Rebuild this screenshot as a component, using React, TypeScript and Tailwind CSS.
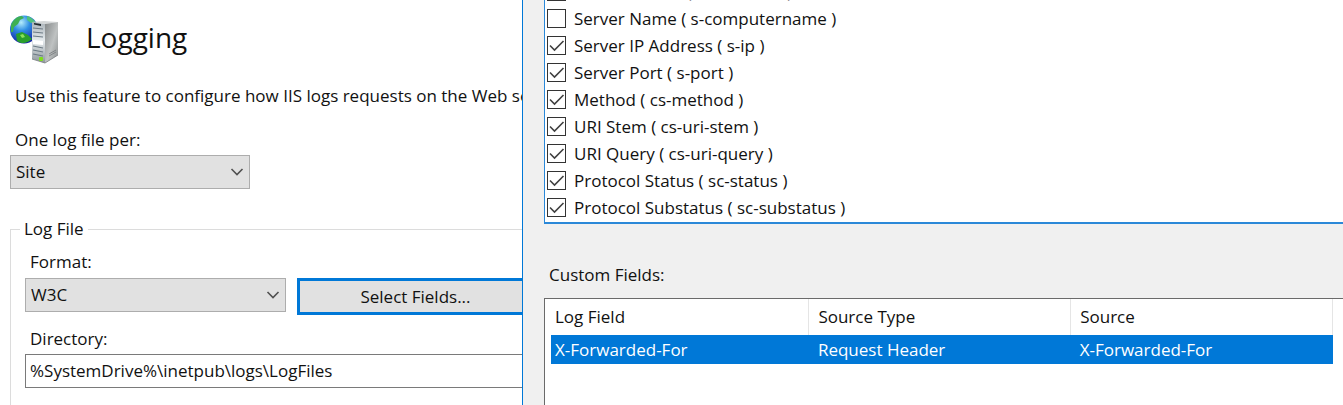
import { useState } from "react";

const initialFields = [
  { id: "s-sitename", label: "Service Name", checked: true },
  { id: "s-computername", label: "Server Name", checked: false },
  { id: "s-ip", label: "Server IP Address", checked: true },
  { id: "s-port", label: "Server Port", checked: true },
  { id: "cs-method", label: "Method", checked: true },
  { id: "cs-uri-stem", label: "URI Stem", checked: true },
  { id: "cs-uri-query", label: "URI Query", checked: true },
  { id: "sc-status", label: "Protocol Status", checked: true },
  { id: "sc-substatus", label: "Protocol Substatus", checked: true },
];

const customFields = [
  { logField: "X-Forwarded-For", sourceType: "Request Header", source: "X-Forwarded-For" },
];

function ServerIcon() {
  return (
    <svg viewBox="0 0 50 50" className="size-[50px] shrink-0" aria-hidden="true">
      <defs>
        <radialGradient id="globe" cx="0.4" cy="0.25" r="0.75">
          <stop offset="0" stopColor="#b4ecfb" />
          <stop offset="0.4" stopColor="#2f8fe4" />
          <stop offset="1" stopColor="#1422a4" />
        </radialGradient>
        <linearGradient id="side" x1="0" y1="0" x2="1" y2="1">
          <stop offset="0" stopColor="#85898a" />
          <stop offset="0.55" stopColor="#bfc2c2" />
          <stop offset="1" stopColor="#8b8f90" />
        </linearGradient>
        <linearGradient id="front" x1="0" y1="0" x2="0" y2="1">
          <stop offset="0" stopColor="#a9b2b8" />
          <stop offset="0.45" stopColor="#e6ebee" />
          <stop offset="1" stopColor="#8d969b" />
        </linearGradient>
      </defs>
      <circle cx="14" cy="14.500" r="14" fill="url(#globe)" />
      <path d="M1 10 C3 5 7 1 12 1 L14 3 L10 5 L8 9 L4 12 L3 17 L1 17 Z" fill="#3fb053" />
      <path d="M17 1 C21 2 24 5 26 8 L21 8 L17 5 Z" fill="#4fc27c" />
      <path d="M6 19 L12 17 L18 20 L22 24 C17 29 11 29 7 26 Z" fill="#2a9f2c" />
      <path d="M10 20 L13 19 L15 22 L12 23 Z" fill="#8ae05a" />
      <path d="M22 7 L34 6 L48 7 L35 9 Z" fill="#d3d6d7" />
      <path d="M22 7 L35 9 L35 48 L22 44 Z" fill="url(#front)" />
      <path d="M35 9 L48 7 L48 40 L35 48 Z" fill="url(#side)" />
      <path d="M24 8 L31 9 L31 11 L24 9.500 Z" fill="#222a30" />
      <path
        d="M23 13 L33 14 M23 17 L33 18 M23 21 L33 22 M23 31 L33 33 M23 35 L33 37 M23 39 L33 41"
        stroke="#6c7a84"
        strokeWidth="1.200"
      />
      <path d="M23 25 L33 26 L33 30 L23 29 Z" fill="#ffffff" />
      <path d="M22 44 L35 48 L48 40" fill="none" stroke="#777c7f" strokeWidth="0.800" />
      <path d="M39 39 L46 35 M39 41 L46 37" stroke="#74797b" strokeWidth="0.800" />
      <rect x="29" y="42" width="4" height="4" rx="1" fill="#7ede1c" />
    </svg>
  );
}

function ComboBox({ id, value, className }: { id: string; value: string; className: string }) {
  return (
    <div className={`relative ${className}`}>
      <select
        id={id}
        defaultValue={value}
        className="block h-[34px] w-full appearance-none border border-[#adadad] bg-[#e1e1e1] px-[5px] outline-none"
      >
        <option>{value}</option>
      </select>
      <svg
        viewBox="0 0 14 8"
        className="pointer-events-none absolute top-[13px] right-1.5 h-2 w-3.5"
        fill="none"
        stroke="#505050"
        strokeWidth="1.600"
      >
        <path d="M1.500 1 L7 6.500 L12.500 1" />
      </svg>
    </div>
  );
}

function FieldRow({
  id,
  label,
  checked,
  onToggle,
}: {
  id: string;
  label: string;
  checked: boolean;
  onToggle: () => void;
}) {
  return (
    <label className="flex h-[27px] shrink-0 items-center gap-2 whitespace-nowrap">
      <span className="relative size-[19px]">
        <input
          type="checkbox"
          checked={checked}
          onChange={onToggle}
          className="block size-[19px] appearance-none border border-[#333333] bg-white"
        />
        {checked && (
          <svg
            viewBox="0 0 19 19"
            className="pointer-events-none absolute inset-0"
            fill="none"
            stroke="#404040"
            strokeWidth="1.600"
          >
            <path d="M3 9.500 L7.500 14 L16.500 5" />
          </svg>
        )}
      </span>
      <span>
        {label} ( {id} )
      </span>
    </label>
  );
}

export default function App() {
  const [fields, setFields] = useState(initialFields);

  function toggleField(id: string) {
    setFields((prev) => prev.map((f) => (f.id === id ? { ...f, checked: !f.checked } : f)));
  }

  return (
    <div className="grid h-screen grid-cols-[522fr_821fr] overflow-hidden bg-white font-['Open_Sans',sans-serif] text-[17px] leading-6 text-[#111111]">

      {/* Logging page */}
      <main className="min-w-0 overflow-hidden whitespace-nowrap pl-2.5">
        <header className="flex gap-[26px] pt-[15px]">
          <ServerIcon />
          <h1 className="text-[28px] leading-[44px]">Logging</h1>
        </header>
        <p className="mt-[19px] pl-[5px]">
          Use this feature to configure how IIS logs requests on the Web server.
        </p>

        <div className="mt-5">
          <label htmlFor="per" className="block pl-[5px]">One log file per:</label>
          <ComboBox id="per" value="Site" className="mt-[3px] w-60" />
        </div>

        <fieldset className="mt-7 h-60 border border-r-0 border-[#dcdcdc] pl-3.5">
          <legend className="-ml-[5px] px-1">Log File</legend>
          <label htmlFor="format" className="mt-[9px] block pl-[5px]">Format:</label>
          <div className="mt-1 flex gap-[11px]">
            <ComboBox id="format" value="W3C" className="w-[261px] shrink-0" />
            <button
              type="button"
              className="h-[37px] w-[237px] shrink-0 border-[3px] border-[#0078d7] bg-[#e1e1e1]"
            >
              Select Fields...
            </button>
          </div>
          <label htmlFor="directory" className="mt-3 block pl-[5px]">Directory:</label>
          <input
            id="directory"
            type="text"
            defaultValue="%SystemDrive%\inetpub\logs\LogFiles"
            className="mt-[3px] block h-[34px] w-full border border-r-0 border-[#7a7a7a] bg-white px-1 pb-0.5 outline-none"
          />
          <p className="mt-3 pl-[5px]">Encoding:</p>
        </fieldset>
      </main>

      {/* Field picker */}
      <section className="flex min-w-0 flex-col border-l border-[#0078d7] bg-[#f0f0f0] pl-[21px]">
        <div className="flex h-56 shrink-0 flex-col justify-end overflow-hidden border-b-2 border-l border-[#2b88d8] bg-white pb-px pl-0.5">
          {fields.map((f) => (
            <FieldRow key={f.id} {...f} onToggle={() => toggleField(f.id)} />
          ))}
        </div>

        <h2 className="mt-[39px] pl-[5px]">Custom Fields:</h2>
        <div className="mt-[11px] flex-1 border-t border-l border-[#6a6a6a] bg-white pr-2.5 pl-1.5">
          <table className="w-full table-fixed border-collapse text-left">
            <colgroup>
              <col className="w-[33%]" />
              <col />
              <col />
            </colgroup>
            <thead>
              <tr className="h-9">
                <th className="border-r border-[#e5e5e5] pl-1 font-normal">Log Field</th>
                <th className="border-r border-[#e5e5e5] pl-[9px] font-normal">Source Type</th>
                <th className="border-r border-[#e5e5e5] pl-[9px] font-normal">Source</th>
              </tr>
            </thead>
            <tbody>
              {customFields.map((c) => (
                <tr key={c.logField} className="h-[29px] bg-[#0078d7] text-white">
                  <td className="pl-1">{c.logField}</td>
                  <td className="pl-[9px]">{c.sourceType}</td>
                  <td className="pl-[9px]">{c.source}</td>
                </tr>
              ))}
            </tbody>
          </table>
        </div>
      </section>

    </div>
  );
}
